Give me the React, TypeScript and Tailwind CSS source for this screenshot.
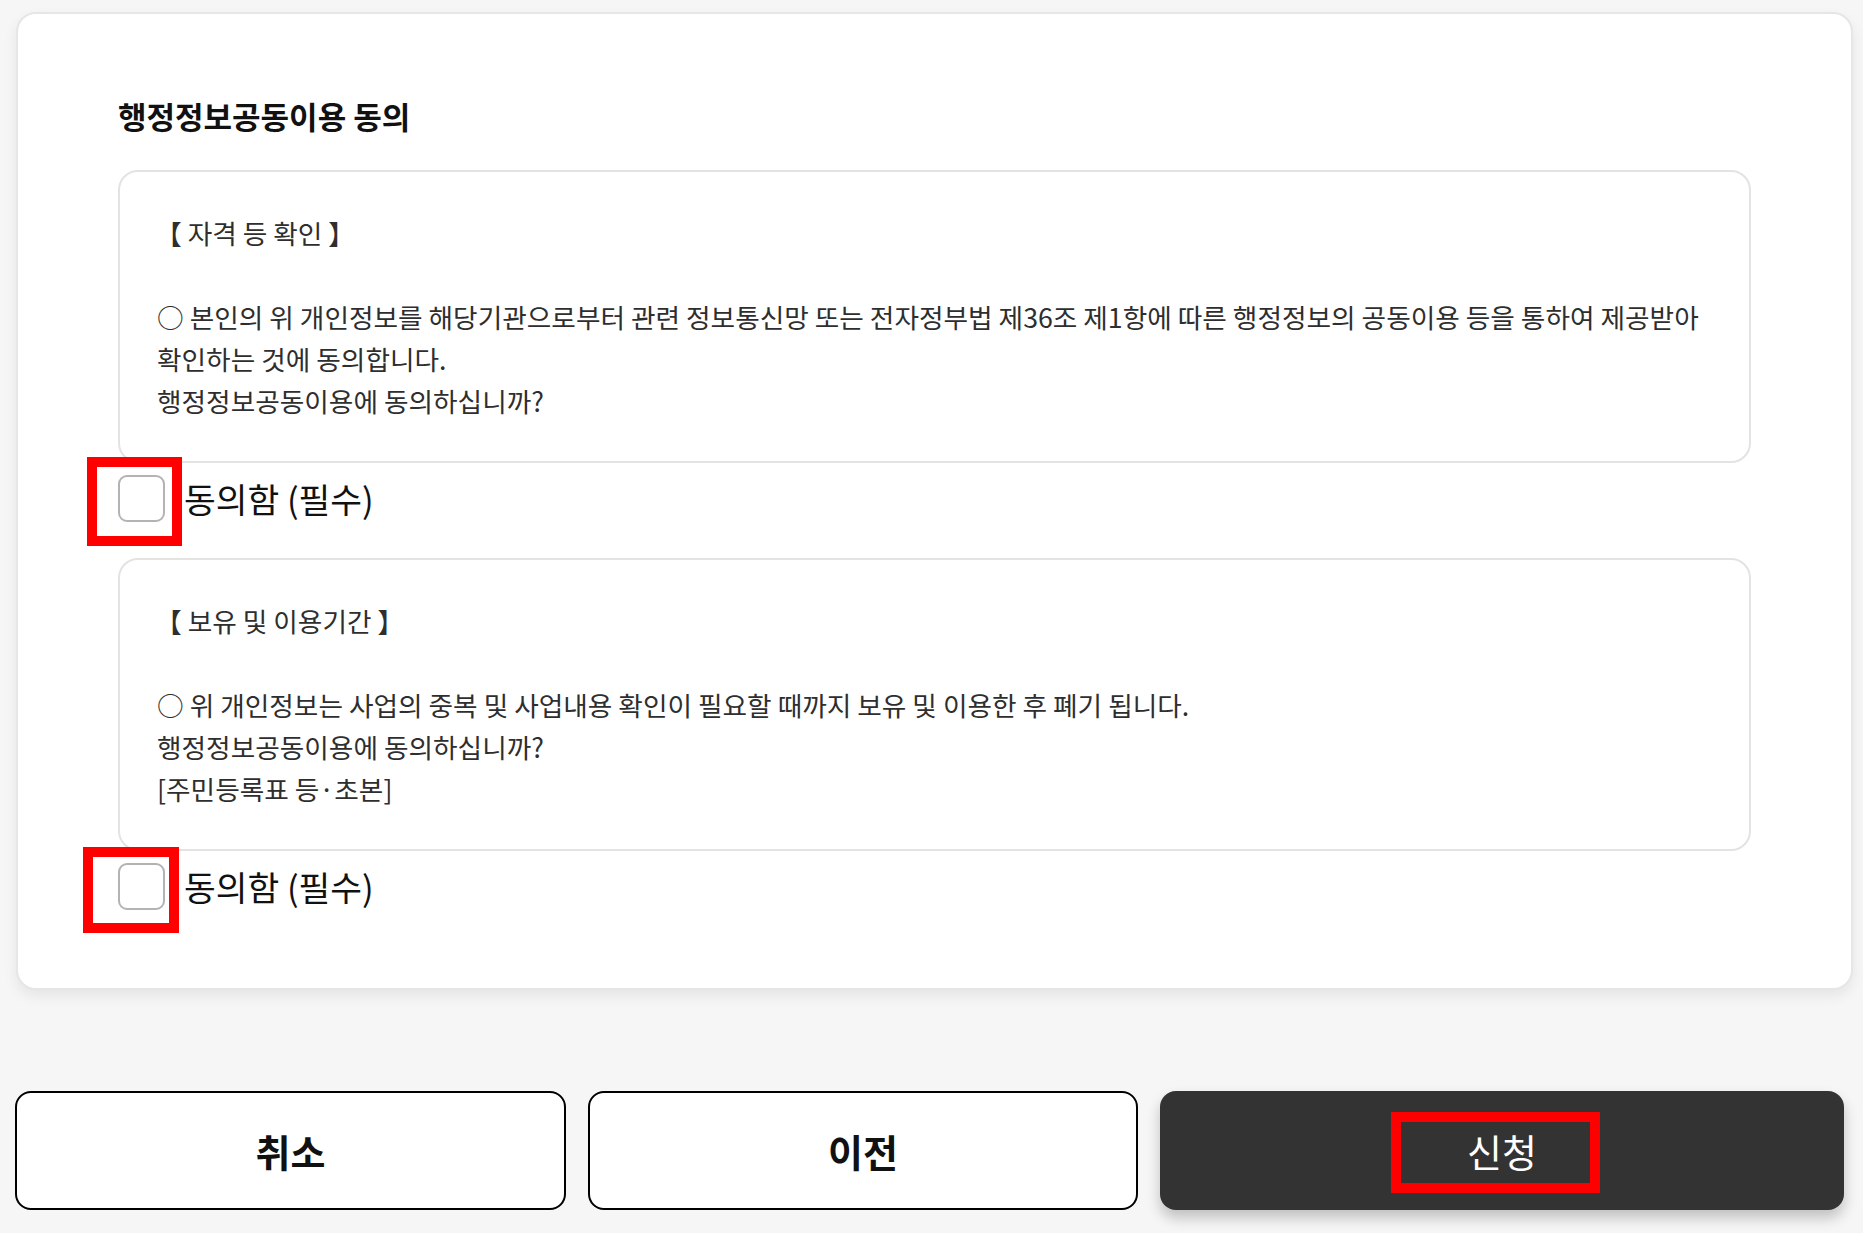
import React from "react";

// ─── Checkbox row ─────────────────────────────────────────────────────────────

function AgreeRow({ mark, className }: { mark: string; className: string }) {
  return (
    <label className={`flex items-center gap-[19px] ${className}`}>
      <span className="relative block w-[47px] h-[47px]">
        <input
          type="checkbox"
          className="appearance-none block w-[47px] h-[47px] rounded-[9px] border-2 border-[#b3b3b3] bg-white"
        />
        <span className={`pointer-events-none absolute border-[10px] border-[#ff0000] ${mark}`} />
      </span>
      <span className="text-[34.5px] leading-[47px] text-[#111]">동의함 (필수)</span>
    </label>
  );
}

// ─── Terms box ────────────────────────────────────────────────────────────────

function TermsBox({ title, lines }: { title: string; lines: string[] }) {
  return (
    <div className="rounded-[20px] border-2 border-[#e3e3e3] bg-white pl-[35px] pr-[16px] pt-[40px] pb-[39px] text-[26.7px] leading-[42px] text-[#2e2e2e]">
      <p className="whitespace-nowrap">{title}</p>
      <p className="mt-[42px] whitespace-nowrap pl-[2px]">
        {lines.map((l, i) => (
          <span key={i} className="block">
            {l}
          </span>
        ))}
      </p>
    </div>
  );
}

export default function App() {
  return (
    <div className="min-h-screen bg-[#f6f6f6] font-['Noto_Sans_CJK_KR','Noto_Sans_CJK_SC',sans-serif] pt-[12px]">
      {/* ── Consent card ── */}
      <section className="ml-[16px] mr-[10px] rounded-[20px] border-2 border-[#e6e6e6] bg-white px-[100px] pt-[82px] pb-[78px] shadow-[0_6px_14px_rgba(0,0,0,0.07)]">
        <h2 className="text-[31px] font-bold leading-[40px] text-[#111]">행정정보공동이용 동의</h2>

        <div className="mt-[34px]">
          <TermsBox
            title="【 자격 등 확인 】"
            lines={[
              "○ 본인의 위 개인정보를 해당기관으로부터 관련 정보통신망 또는 전자정부법 제36조 제1항에 따른 행정정보의 공동이용 등을 통하여 제공받아",
              "확인하는 것에 동의합니다.",
              "행정정보공동이용에 동의하십니까?",
            ]}
          />
          <AgreeRow className="mt-[12px] mb-[36px]" mark="left-[-31px] top-[-18px] w-[95px] h-[89px]" />

          <TermsBox
            title="【 보유 및 이용기간 】"
            lines={[
              "○ 위 개인정보는 사업의 중복 및 사업내용 확인이 필요할 때까지 보유 및 이용한 후 폐기 됩니다.",
              "행정정보공동이용에 동의하십니까?",
              "[주민등록표 등·초본]",
            ]}
          />
          <AgreeRow className="mt-[12px]" mark="left-[-35px] top-[-16px] w-[96px] h-[86px]" />
        </div>
      </section>

      {/* ── Actions ── */}
      <div className="mt-[101px] pl-[15px] pr-[19px] grid grid-cols-[551px_550px_1fr] gap-[22px]">
        <button className="h-[119px] rounded-[16px] border-2 border-black bg-white text-[38px] font-bold text-[#111]">
          취소
        </button>
        <button className="h-[119px] rounded-[16px] border-2 border-black bg-white text-[38px] font-bold text-[#111]">
          이전
        </button>
        <button className="relative h-[119px] rounded-[16px] bg-[#333333] text-[38px] text-white shadow-[0_8px_14px_rgba(0,0,0,0.22)]">
          신청
          <span className="pointer-events-none absolute left-[231px] top-[21px] w-[209px] h-[81px] border-[10px] border-[#ff0000]" />
        </button>
      </div>
    </div>
  );
}
